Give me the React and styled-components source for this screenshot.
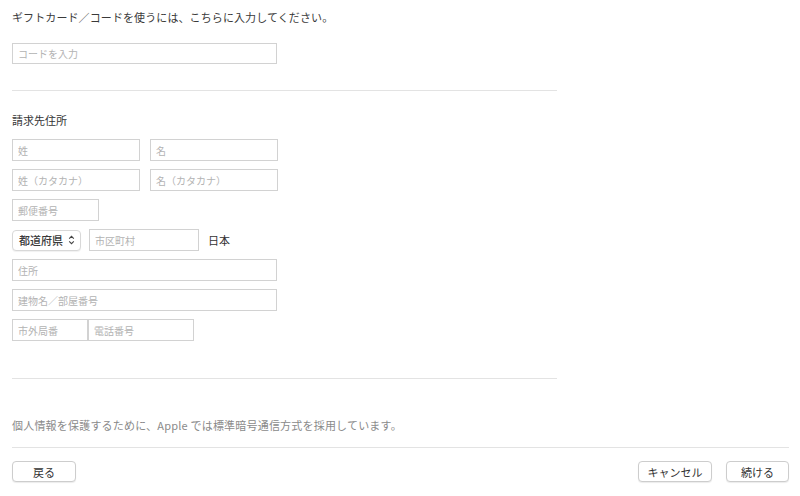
import React from "react";
import styled, { createGlobalStyle } from "styled-components";

const GlobalStyle = createGlobalStyle`
  body {
    margin: 0;
    background: #fff;
    font-family: "Noto Sans CJK JP", "Noto Sans", sans-serif;
    color: #333;
  }
  * { box-sizing: border-box; }
`;

const Page = styled.div`
  width: 800px;
  height: 496px;
  padding: 0 11px 0 12px;
  overflow: hidden;
`;

const Intro = styled.p`
  margin: 9px 0 0;
  font-size: 11px;
  line-height: 16px;
  color: #3a3a3a;
  letter-spacing: 0.1px;
`;

const Field = styled.input`
  display: block;
  width: ${(p) => p.$w}px;
  height: 22px;
  margin: 0;
  padding: 0 5px;
  border: 1px solid #d2d2d2;
  border-radius: 0;
  font-family: inherit;
  font-size: 10px;
  color: #333;
  background: #fff;
  outline: none;
  &::placeholder {
    color: #b3b3b3;
  }
`;

const CodeField = styled(Field)`
  margin-top: 18px;
  height: 21px;
`;

const Divider = styled.hr`
  width: ${(p) => p.$w}px;
  margin: ${(p) => p.$top}px 0 0;
  border: 0;
  border-top: 1px solid #e3e3e3;
  height: 0;
`;

const Heading = styled.h3`
  margin: 21px 0 0;
  font-size: 11px;
  line-height: 16px;
  font-weight: 400;
  color: #333;
`;

const Rows = styled.div`
  display: flex;
  flex-direction: column;
  gap: 8px;
  margin-top: 11px;
`;

const Row = styled.div`
  display: flex;
  align-items: center;
  gap: ${(p) => p.$gap ?? 10}px;
`;

const Select = styled.div`
  display: flex;
  align-items: center;
  justify-content: space-between;
  width: 69px;
  height: 21px;
  padding: 0 5px 0 6px;
  border: 1px solid #d8d8d8;
  border-radius: 4px;
  background: #fff;
  box-shadow: 0 1px 1px rgba(0, 0, 0, 0.06);
  font-size: 11px;
  font-weight: 500;
  white-space: nowrap;
  color: #3a3a3a;
  cursor: pointer;
`;

const Country = styled.span`
  font-size: 11px;
  color: #333;
  margin-left: 1px;
`;

const Privacy = styled.p`
  margin: 38px 0 0;
  font-size: 11px;
  line-height: 16px;
  letter-spacing: 0.2px;
  color: #8a8a8a;
`;

const Footer = styled.div`
  display: flex;
  align-items: center;
  margin-top: 13px;
`;

const Spacer = styled.div`
  flex: 1;
`;

const Button = styled.button`
  width: ${(p) => p.$w}px;
  height: 21px;
  margin-left: ${(p) => p.$ml ?? 0}px;
  padding: 0;
  border: 1px solid #cdcdcd;
  border-radius: 4px;
  background: #fff;
  box-shadow: 0 1px 1px rgba(0, 0, 0, 0.08);
  font-family: inherit;
  font-size: 11px;
  color: #333;
  cursor: pointer;
`;

const UpDown = () => (
  <svg width="7" height="10" viewBox="0 0 7 10" fill="none">
    <path d="M1.2 3.6L3.5 1.3L5.8 3.6" stroke="#444" strokeWidth="1.1" />
    <path d="M1.2 6.4L3.5 8.7L5.8 6.4" stroke="#444" strokeWidth="1.1" />
  </svg>
);

export default function App() {
  return (
    <Page>
      <GlobalStyle />
      <Intro>ギフトカード／コードを使うには、こちらに入力してください。</Intro>
      <CodeField $w={265} placeholder="コードを入力" />
      <Divider $w={545} $top={26} />

      <Heading>請求先住所</Heading>
      <Rows>
        <Row>
          <Field $w={128} placeholder="姓" />
          <Field $w={128} placeholder="名" />
        </Row>
        <Row>
          <Field $w={128} placeholder="姓（カタカナ）" />
          <Field $w={128} placeholder="名（カタカナ）" />
        </Row>
        <Row>
          <Field $w={87} placeholder="郵便番号" />
        </Row>
        <Row $gap={8}>
          <Select role="button">
            都道府県
            <UpDown />
          </Select>
          <Field $w={110} placeholder="市区町村" />
          <Country>日本</Country>
        </Row>
        <Row>
          <Field $w={265} placeholder="住所" />
        </Row>
        <Row>
          <Field $w={265} placeholder="建物名／部屋番号" />
        </Row>
        <Row $gap={0}>
          <Field $w={76} placeholder="市外局番" />
          <Field $w={106} placeholder="電話番号" />
        </Row>
      </Rows>

      <Divider $w={545} $top={37} />
      <Privacy>個人情報を保護するために、Apple では標準暗号通信方式を採用しています。</Privacy>
      <Divider $w={777} $top={14} />

      <Footer>
        <Button $w={64}>戻る</Button>
        <Spacer />
        <Button $w={74}>キャンセル</Button>
        <Button $w={63} $ml={14}>続ける</Button>
      </Footer>
    </Page>
  );
}
